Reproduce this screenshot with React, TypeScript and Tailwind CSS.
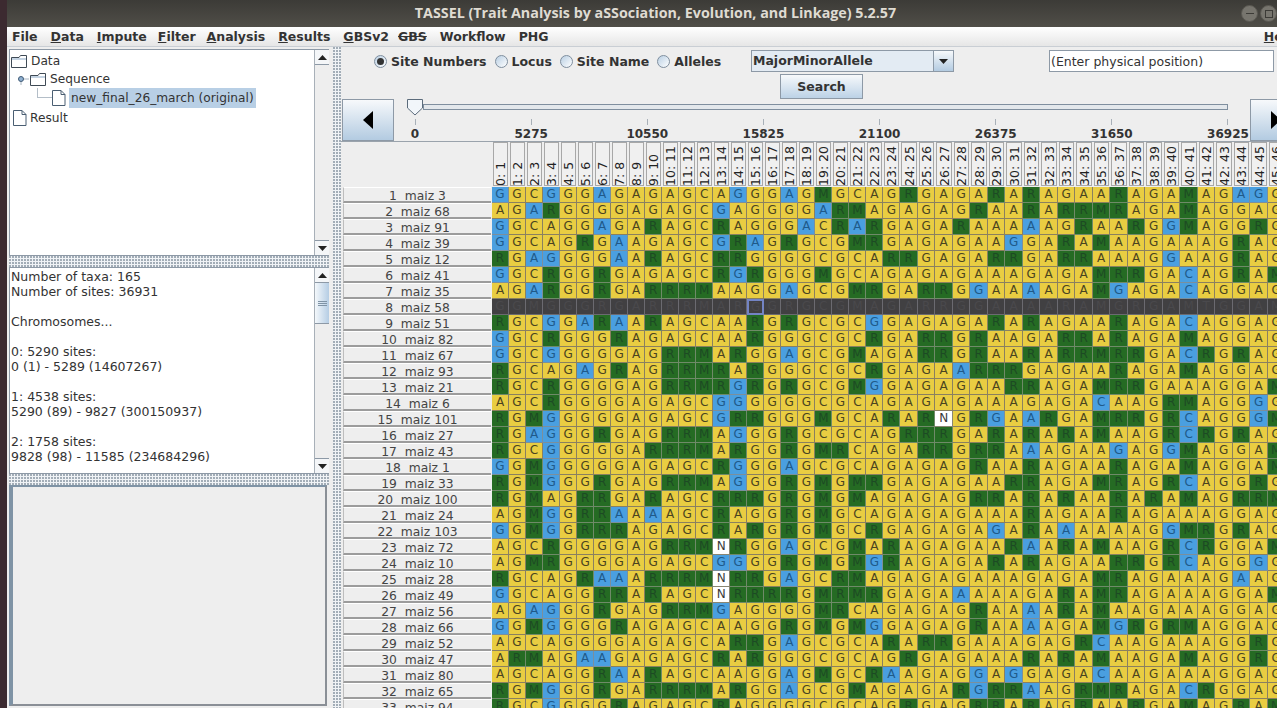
const dialog = "[font-family:'DejaVu_Sans',sans-serif]";

const rows: [string, string][] = [
  ["1  maiz 3", "gGCgGGaGAG" + "AGCAgGGaGMGCAGRGAG" + "ARARAGAARAGAMAGag" + "G"],
  ["2  maiz 68", "AGaRGGGGAG" + "AGCgAGGGGaRMAGAGAG" + "RAARARRMRAGAMAGGA" + "G"],
  ["3  maiz 91", "gGCAGGaGAR" + "AGCRAGGGaCRaRGAGAR" + "AAAaAGRAARGgMAGGR" + "G"],
  ["4  maiz 39", "gGCAGRGaAG" + "AGCgRaGRGCGMRGAGAG" + "AAgGARAMAAGAAAGRA" + "G"],
  ["5  maiz 12", "RGagGGGaAR" + "AGCRRGGGGCGCARRGAG" + "ARRGARRAAAGgAAGRA" + "G"],
  ["6  maiz 41", "gGCRGGRGAG" + "AGCRgRGGGMGCAGAGAG" + "AAAGAGAMRRGAcAGRA" + "M"],
  ["7  maiz 35", "AGaRGGRGAR" + "RRMAAGGaGCGMRGARRG" + "gAAaAGAMgAGAcAGGA" + "G"],
  ["8  maiz 58", "GGMGGGRGAR" + "RRMARGGRGCGMAGARRG" + "GAAAARAMGRGAMTGGA" + "M"],
  ["9  maiz 51", "RGCgGaRaAR" + "AGCAARGRGCGCgGAGAG" + "ARARAGAARAGAcAGGA" + "G"],
  ["10  maiz 82", "gGCRGGGRAG" + "AGCAARGGGCGCRGARRG" + "RAAGARRARAGAMAGGA" + "G"],
  ["11  maiz 67", "gGCgGGGGAG" + "RRMARGGaGCGMAGARRG" + "RAARARRMRRGAcRGRA" + "G"],
  ["12  maiz 93", "RGCAGaGRAGRRMRARGGG" + "CGCRGAGAaRRRGAGAARAGAMAGGAG"],
  ["13  maiz 21", "RGCRGGGGAGRRMRgRGRG" + "CGMgGAGAGAARRAGAMRRGAAAGGAM"],
  ["14  maiz 6", "AGCRGGGGAGAGCggGGGG" + "CGCAGAGAGAAAGAGAcAAGRMAGGgG"],
  ["15  maiz 101", "RGMgGGGGAGAGCgRRGGG" + "MGCARARNGRgAaRGAMRRGRcAGGgM"],
  ["16  maiz 27", "RGagGGRGAGRRMAgGGRG" + "CGCAGRRRGARARARAMAAGRcRGRAG"],
  ["17  maiz 43", "RGCgGGGGARRRMARGGRG" + "MRCAGARRGRRAaAGAAgAGgMAGGAM"],
  ["18  maiz 1", "gGMgGGGGAGAGCRgGGaG" + "CGCAGAGAGRAARAGAARAGAMAGGAM"],
  ["19  maiz 33", "RGMgGGRGAGRRMAgGGRG" + "MGMRGAGAGAARRAGAMRAGRcAGGRG"],
  ["20  maiz 100", "RGMAGRRGARAGCRRRGRG" + "MGMAGAGAGRRARARAARARAMAGRRM"],
  ["21  maiz 24", "AGMgGRRaAaAGCRAGGRG" + "MGCAGAGAGAAARAGAARAGAAAGGAG"],
  ["22  maiz 103", "gGMgGRRRAGAGCRARGRG" + "MGCRGAGAGAgARAaAAAAGgMRGRAG"],
  ["23  maiz 72", "AGCRGGGGAGRRMNRGGaG" + "CGMARAGAGAARaARAMAAGRcRGGAM"],
  ["24  maiz 10", "AGMRGGGGAGAGCggGGRG" + "MGMgRAGAGARARAGAARRGRcAGGgG"],
  ["25  maiz 28", "RGCAGRaaARRRMNRRGaG" + "CRMAGAGAGAAAGAGAMRAGAAAGaAG"],
  ["26  maiz 49", "gGCAGGRRARAGCNRRRRG" + "MRMRGAGAaAAAGARAMRAGAAAGGAM"],
  ["27  maiz 56", "AGagGGRGAGRRMgAGGGG" + "MRCAGAGAGRAAaARAMAAGAAAGGAG"],
  ["28  maiz 66", "gGMgGGGRAGAGCAAGGRG" + "MGMgGAGAGRAAaAGAMgRGRMAGGAG"],
  ["29  maiz 52", "AGCAGGGGAGAGCARRGaG" + "CGCARARRGAAAGAGRcAAGAAAGGRG"],
  ["30  maiz 47", "ARMAGaaGAGAGCRARGGG" + "CGCAGRGAGAAARARAMAAGAMAGGRG"],
  ["31  maiz 80", "AGCAGGRaARAGCAAGGaG" + "MGCRaAGAGgAgGAGAcAAGAAAGGAG"],
  ["32  maiz 65", "RGMgGGRGARRRMARGGaG" + "CGMAGAGARgRRaAGRMRAGAcRGGAG"],
  ["33  maiz 94", "RGCgGGGRAGAGCRAGGGG" + "CGCAGRGAGRRARAGRAARGAMAGRAM"],
];

const ticks = ["0", "5275", "10550", "15825", "21100", "26375", "31650", "36925"];

const dots =
  "bg-[#f0f3f6] bg-[radial-gradient(circle_at_1px_1px,#a0aab4_0.7px,transparent_0.9px)] bg-[length:3px_3px]";

function cellClass(ch: string, dark: boolean, selected: boolean) {
  if (selected) return "bg-[#414042] text-[#4a494c] border-2 border-[#7384c4]";
  if (dark) return "bg-[#414042] text-[#4a494c] border-r border-b border-[#6b6a70]";
  if (ch === "N") return "bg-white text-[#3a3a3a] border-r border-b border-[#8a8672]";
  if (ch === "R" || ch === "M") return "bg-[#256b23] text-[#1d4a24] border-r border-b border-[#6f8a68]";
  if (ch === "a" || ch === "g" || ch === "c") return "bg-[#4a9fe0] text-[#1f5a8a] border-r border-b border-[#7b8f9c]";
  return "bg-[#e9cd42] text-[#4a4420] border-r border-b border-[#8a8060]";
}

function Folder() {
  return (
    <svg width="17" height="14" viewBox="0 0 17 14" className="shrink-0">
      <path d="M0.5 3.5V13.5H15.5V1.5H9.5L8 3.5Z" fill="#fff" stroke="#3f4a55" />
      <path d="M1 4H15V6H1Z" fill="#c4d3e2" />
    </svg>
  );
}

function Doc() {
  return (
    <svg width="14" height="16" viewBox="0 0 14 16" className="shrink-0">
      <path d="M0.5 0.5H9L13 4.5V15.5H0.5Z" fill="#fff" stroke="#4a5e72" />
      <path d="M9 0.5V4.5H13" fill="none" stroke="#4a5e72" />
    </svg>
  );
}

function Triangle({ up }: { up?: boolean }) {
  return (
    <svg width="9" height="5" viewBox="0 0 9 5">
      <path d={up ? "M0 5H9L4.5 0Z" : "M0 0H9L4.5 5Z"} fill="#222" />
    </svg>
  );
}

function ScrollBar({ thumb }: { thumb?: boolean }) {
  return (
    <div className="w-[15px] shrink-0 flex flex-col bg-[#eeeeee] border-l border-[#a8b0b8]">
      <div className="h-[15px] flex items-center justify-center bg-[#f4f6f8] border-b border-[#8d99a6]">
        <Triangle up />
      </div>
      {thumb && (
        <div className="h-[41px] flex flex-col gap-[1px] items-center justify-center bg-gradient-to-r from-[#f4f8fb] to-[#b5cde4] border-b border-[#8d99a6]">
          <div className="w-[9px] h-[1px] bg-[#7f93a5]" />
          <div className="w-[9px] h-[1px] bg-[#7f93a5]" />
          <div className="w-[9px] h-[1px] bg-[#7f93a5]" />
        </div>
      )}
      <div className="flex-1" />
      <div className="h-[15px] flex items-center justify-center bg-[#f4f6f8] border-t border-[#8d99a6]">
        <Triangle />
      </div>
    </div>
  );
}

function Radio({ label, on }: { label: string; on?: boolean }) {
  return (
    <div className="flex items-center gap-[4px]">
      <div className="w-[13px] h-[13px] rounded-full border border-[#7f8e9e] bg-gradient-to-br from-[#b9cfe3] to-white flex items-center justify-center">
        {on && <div className="w-[7px] h-[7px] rounded-full bg-[#333]" />}
      </div>
      <span className="font-bold">{label}</span>
    </div>
  );
}

function ArrowButton({ right }: { right?: boolean }) {
  return (
    <div className="h-[42px] shrink-0 w-[52px] flex items-center justify-center bg-gradient-to-b from-[#f7f9fb] to-[#b3cbe1] border border-[#8d99a6]">
      <svg width="10" height="18" viewBox="0 0 10 18">
        <path d={right ? "M0 0L10 9L0 18Z" : "M10 0L0 9L10 18Z"} fill="#000" />
      </svg>
    </div>
  );
}

function Menu({ first, rest, plain }: { first: string; rest: string; plain?: boolean }) {
  return (
    <span className="font-bold text-[#333]">
      <span className={plain ? "" : "underline"}>{first}</span>
      {rest}
    </span>
  );
}

export default function App() {
  return (
    <div className={`w-[1277px] h-[708px] overflow-hidden flex bg-[#3c2a30] text-[12.5px] leading-[15px] text-[#333] ${dialog}`}>
      <div className="w-[7px] shrink-0" />
      <div className="flex-1 min-w-0 flex flex-col">
        {/* title bar */}
        <div className="h-[27px] shrink-0 flex items-center bg-gradient-to-b from-[#3c3b37] to-[#504e48]">
          <div className="flex-1 pl-[63px] pb-[2px] text-center font-bold text-[14.3px] text-[#dfdbd2] [font-family:'Open_Sans',sans-serif]">
            TASSEL (Trait Analysis by aSSociation, Evolution, and Linkage) 5.2.57
          </div>
          <div className="flex gap-[2px] shrink-0">
            <div className="w-[17px] h-[17px] rounded-full bg-[#77756e] border border-[#5a5852] flex items-center justify-center">
              <div className="w-[8px] h-[1px] bg-[#3c3b37]" />
            </div>
            <div className="w-[17px] h-[17px] rounded-full bg-[#77756e] border border-[#5a5852] flex items-center justify-center">
              <div className="w-[8px] h-[8px] border border-[#3c3b37]" />
            </div>
          </div>
        </div>

        {/* menu bar */}
        <div className="h-[20px] shrink-0 flex items-center pl-[5px] bg-gradient-to-b from-white to-[#e6e6e6] border-b border-[#c9ced4]">
          <Menu first="File" rest="" plain />
          <span className="ml-[13px]"><Menu first="D" rest="ata" /></span>
          <span className="ml-[13px]"><Menu first="I" rest="mpute" /></span>
          <span className="ml-[11px]"><Menu first="F" rest="ilter" /></span>
          <span className="ml-[11px]"><Menu first="A" rest="nalysis" /></span>
          <span className="ml-[13px]"><Menu first="R" rest="esults" /></span>
          <span className="ml-[13px]"><Menu first="G" rest="BSv2" /></span>
          <span className="ml-[9px] font-bold line-through">GBS</span>
          <span className="ml-[13px] font-bold">Workflow</span>
          <span className="ml-[13px] font-bold">PHG</span>
          <span className="ml-auto -mr-[19px] shrink-0">
            <Menu first="H" rest="elp" />
          </span>
        </div>

        <div className="flex-1 min-h-0 flex bg-[#eeeeee]">
          {/* left column */}
          <div className="w-[326px] shrink-0 flex flex-col pl-[2px] pr-[4px] pt-[2px]">
            <div className="h-[207px] shrink-0 flex bg-white border border-[#8d99a6] border-r-0">
              <div className="flex-1 relative px-[1px] pt-[2px] text-[12.2px]">
                <div className="h-[18px] flex items-center gap-[3px]">
                  <Folder />
                  <span>Data</span>
                </div>
                <div className="h-[18px] flex items-center gap-[1px] pl-[6px]">
                  <svg width="12" height="12" viewBox="0 0 12 12" className="shrink-0">
                    <circle cx="4" cy="6" r="2.5" fill="#8fb0d0" stroke="#3f5a75" />
                    <path d="M4 9V12M7 6H12" stroke="#a8b4c0" />
                  </svg>
                  <span className="flex items-center gap-[3px]">
                    <Folder />
                    <span>Sequence</span>
                  </span>
                </div>
                <div className="h-[20px] flex items-center pl-[26px]">
                  <div className="w-[15px] h-[10px] -mt-[10px] border-l border-b border-[#b4bec8] shrink-0" />
                  <Doc />
                  <span className="ml-[3px] px-[2px] h-[20px] flex items-center bg-[#b8cfe5] whitespace-nowrap">
                    new_final_26_march (original)
                  </span>
                </div>
                <div className="h-[20px] flex items-center gap-[3px] pl-[2px]">
                  <Doc />
                  <span>Result</span>
                </div>
              </div>
              <ScrollBar />
            </div>
            <div className={`h-[11px] shrink-0 ${dots}`} />
            <div className="h-[207px] shrink-0 flex bg-white border border-[#8d99a6] border-r-0">
              <div className="flex-1 whitespace-pre pl-[1px] pt-[1px]">
                {"Number of taxa: 165\nNumber of sites: 36931\n\nChromosomes...\n\n0: 5290 sites:\n0 (1) - 5289 (14607267)\n\n1: 4538 sites:\n5290 (89) - 9827 (300150937)\n\n2: 1758 sites:\n9828 (98) - 11585 (234684296)"}
              </div>
              <ScrollBar thumb />
            </div>
            <div className={`h-[11px] shrink-0 ${dots}`} />
            <div className="h-[221px] shrink-0 mr-[2px] bg-[#eeeeee] border-l-4 border-l-[#7f93a5] border-t-2 border-t-[#7f93a5] border-r-2 border-r-[#8a8f96] border-b-2 border-b-[#8a8f96]" />
          </div>

          <div className={`w-[8px] shrink-0 ${dots}`} />

          {/* alignment viewer */}
          <div className="flex-1 min-w-0 overflow-hidden flex flex-col">
            <div className="h-[26px] shrink-0 flex items-start pt-[3px] font-bold">
              <div className="h-[22px] flex items-center gap-[8px] pl-[33px] w-[410px] shrink-0">
                <Radio label="Site Numbers" on />
                <Radio label="Locus" />
                <Radio label="Site Name" />
                <Radio label="Alleles" />
              </div>
              <div className="w-[203px] h-[22px] shrink-0 flex border border-[#8d99a6] bg-[#e3ebf3]">
                <span className="flex-1 pl-[1px] pb-[2px] flex items-center">MajorMinorAllele</span>
                <div className="w-[20px] flex items-center justify-center bg-gradient-to-b from-[#f7f9fb] to-[#b3cbe1] border-l border-[#8d99a6]">
                  <Triangle />
                </div>
              </div>
              <div className="ml-[95px] w-[225px] h-[22px] shrink-0 flex items-center pl-[1px] bg-white border border-[#8d99a6] font-normal whitespace-nowrap">
                (Enter physical position)
              </div>
            </div>
            <div className="h-[26px] shrink-0 pl-[439px] pt-[1px]">
              <div className="w-[83px] h-[25px] flex items-center justify-center font-bold bg-gradient-to-b from-[#f7f9fb] to-[#bcd2e6] border border-[#8d99a6]">
                Search
              </div>
            </div>
            <div className="h-[43px] shrink-0 flex border-b border-[#9aa3ac] pl-[1px]">
              <ArrowButton />
              <div className="w-[856px] shrink-0 relative pl-[21px]">
                <svg width="16" height="17" viewBox="0 0 16 17" className="absolute left-[13px] top-[0px]">
                  <path d="M0.5 0.5H15.5V9L8 16L0.5 9Z" fill="#f2f6fa" stroke="#5b6b7b" />
                </svg>
                <div className="ml-[8px] mt-[5px] h-[6px] w-[805px] bg-[#e3e7eb] border border-[#7f8e9e]" />
                <div className="mt-[9px] w-[813px] flex justify-between">
                  {ticks.map((t) => (
                    <div key={t} className="w-0 flex flex-col items-center">
                      <div className="w-[1px] h-[6px] bg-[#a8b0b8] shrink-0" />
                      <span className="mt-[2px] font-bold text-[12px]">{t}</span>
                    </div>
                  ))}
                </div>
              </div>
              <ArrowButton right />
            </div>

            <div className="grid grid-cols-[151px_repeat(24,17.02px)_repeat(22,17.5px)] grid-rows-[45px] auto-rows-[16px] text-[12px]">
              <div />
              {Array.from({ length: 46 }, (_, i) => (
                <div key={i} className="min-w-0 overflow-hidden flex items-center justify-center mx-[1px] mb-[1px] pt-[2px] border border-[#a8a8a8] bg-[#f0f0f0] text-[#222] text-[12.5px]">
                  <span className="[writing-mode:vertical-rl] rotate-180 whitespace-nowrap h-[41px] font-medium">
                    {i}: {i + 1}
                  </span>
                </div>
              ))}
              {rows.map(([label, cells], r) => [
                <div key={label} className="ml-[2px] mr-[1px] min-w-0 text-center text-[#444] text-[12.3px] leading-[17px] whitespace-pre bg-[#eeeeee] border-t border-t-white border-l border-l-[#bdbdbd] border-b-2 border-b-[#9c9c9c]">
                  {label}
                </div>,
                ...cells.split("").map((ch, c) => (
                  <div
                    key={label + c}
                    className={`min-w-0 flex items-center justify-center ${cellClass(ch, r === 7, r === 7 && c === 15)}`}
                  >
                    {ch.toUpperCase()}
                  </div>
                )),
              ])}
            </div>
          </div>
        </div>
      </div>
    </div>
  );
}
